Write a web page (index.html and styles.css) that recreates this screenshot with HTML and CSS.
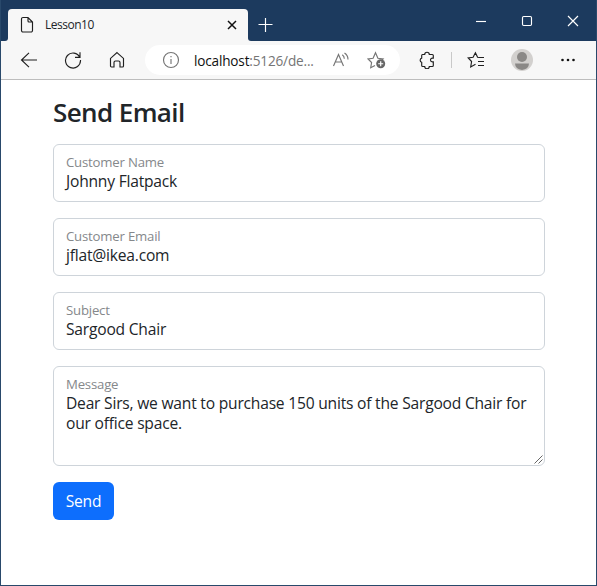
FILE: index.html
```html
<!DOCTYPE html>
<html lang="en">
<head>
<meta charset="utf-8">
<title>Lesson10</title>
<link rel="stylesheet" href="styles.css">
</head>
<body>
<div class="window">
  <header class="titlebar">
    <div class="edge"></div>
    <div class="tab-well"><div class="tab">
      <svg class="page-icon" width="14" height="18" viewBox="0 0 14 18"><path d="M3 1.5h5l4.5 4.5v8.500a1.500 1.500 0 0 1-1.500 1.500H3a1.500 1.500 0 0 1-1.500-1.500V3A1.500 1.500 0 0 1 3 1.500zM8 1.500V5a1 1 0 0 0 1 1h3.500"/></svg>
      <span class="tab-title">Lesson10</span>
      <svg class="tab-close" width="10" height="10" viewBox="0 0 10 10"><path d="M1 1l8 8M9 1L1 9"/></svg>
    </div></div>
    <div class="caption">
      <svg class="plus" width="16" height="16" viewBox="0 0 16 16"><path d="M7.500 1v14M.5 7.500h14"/></svg>
      <div class="controls">
        <svg width="12" height="12" viewBox="0 0 12 12"><path d="M1 6.500h10"/></svg>
        <svg width="12" height="12" viewBox="0 0 12 12"><rect x="1.500" y="1.500" width="9" height="9" rx="1.200"/></svg>
        <svg width="12" height="12" viewBox="0 0 12 12"><path d="M1 1l10 10M11 1L1 11"/></svg>
      </div>
    </div>
  </header>
  <nav class="toolbar">
    <svg class="back" width="18" height="18" viewBox="0 0 18 18"><path d="M17 9H1.500M9 1.800L1.500 9 9 16.200"/></svg>
    <svg class="reload" width="18" height="18" viewBox="0 0 18 18"><path d="M15.800 6.300A7.500 7.500 0 1 0 16.500 9M16 1.300v5h-5"/></svg>
    <svg class="home" width="16" height="18" viewBox="0 0 16 18"><path d="M8 1.600L14.500 7.400v7.600a1 1 0 0 1-1 1h-2.500v-4.500a1.500 1.500 0 0 0-1.500-1.500h-3A1.500 1.500 0 0 0 5 11.500V16H2.500a1 1 0 0 1-1-1V7.400z"/></svg>
    <div class="address">
      <svg class="info" width="18" height="18" viewBox="0 0 18 18"><circle cx="9" cy="9" r="7.500"/><path d="M9 8v5M9 5v1.300"/></svg>
      <span class="url"><b>localhost</b>:5126/de...</span>
      <svg class="read" width="18" height="18" viewBox="0 0 18 18"><path d="M1.500 15L6.500 3.500 11.500 15M3.200 11h6.600M10.300 3.800q2 1.500 2 4M12.500 2q3.500 2.300 3.500 6.500"/></svg>
      <svg class="star" width="20" height="18" viewBox="0 0 20 18"><path d="M8 14.500l-4.300 2.200 .9-5.200-3.500-3.500 5-.7L8.500 1.800l2.400 5.500 5.200.7-1.300 1.300"/><circle class="badge" cx="13.700" cy="12.700" r="4.500"/><path class="badge-plus" d="M13.700 10.200v5M11.200 12.700h5"/></svg>
    </div>
    <svg class="puzzle" width="16" height="18" viewBox="0 0 16 18"><path d="M3.500 3.500H5.700a2.300 2.300 0 0 1 4.600 0h3a1 1 0 0 1 1 1v2.600h-.9a1.900 1.900 0 0 0 0 3.800h.9v3.600a1 1 0 0 1-1 1h-3a2.300 2.300 0 0 1-4.600 0H3.700a1 1 0 0 1-1-1V11.300a2.200 2.200 0 0 1 0-4.200V4.500a1 1 0 0 1 .8-1z"/></svg>
    <span class="divider"></span>
    <svg class="favorites" width="18" height="18" viewBox="0 0 18 18"><path d="M8.500 13.300l-4.800 2.700 .9-5.500L1.200 7l4.900-.8L8.400 1.800l2.200 4.400 1.500.3H17M11 10.500h6M11 14.500h6"/></svg>
    <svg class="avatar" width="22" height="22" viewBox="0 0 22 22"><circle class="disc" cx="11" cy="11" r="11"/><circle class="person" cx="11" cy="8" r="5"/><path class="person" d="M4 14.500h14q-.2 5.700-7 6.500-6.800-.8-7-6.500z"/></svg>
    <svg class="more" width="16" height="4" viewBox="0 0 16 4"><circle cx="2.500" cy="2" r="1.300"/><circle cx="8" cy="2" r="1.300"/><circle cx="13.500" cy="2" r="1.300"/></svg>
  </nav>
  <main class="page">
    <h1>Send Email</h1>
    <div class="field"><span class="label">Customer Name</span><span class="value">Johnny Flatpack</span></div>
    <div class="field"><span class="label">Customer Email</span><span class="value">jflat@ikea.com</span></div>
    <div class="field"><span class="label">Subject</span><span class="value">Sargood Chair</span></div>
    <div class="field message"><span class="label">Message</span><span class="value">Dear Sirs, we want to purchase 150 units of the Sargood Chair for<br>our office space.</span>
      <svg class="grip" width="9" height="9" viewBox="0 0 9 9"><path d="M.5 8.500l8-8M4.500 8.500l4-4"/></svg>
    </div>
    <button class="send">Send</button>
  </main>
</div>
</body>
</html>
```
FILE: styles.css
```css
* { box-sizing: border-box; }
body { margin: 0; font-family: "Open Sans", "Noto Sans", sans-serif; color: #212529; }
svg { display: block; flex: none; fill: none; stroke: #202020; stroke-width: 1.15; }
.window { display: flex; flex-direction: column; width: 597px; height: 586px; background: #fff; border: 1px solid #29496b; border-top: 0; overflow: hidden; }
.titlebar { display: flex; height: 41px; background: #f7f7f7; flex: none; }
.edge { width: 7px; background: #1c3a5e; border-bottom-right-radius: 3px; }
.tab-well { width: 240px; padding-top: 9px; background: linear-gradient(#1c3a5e 20px, #f7f7f7 20px); }
.tab { display: flex; align-items: center; height: 32px; padding: 0 11px 0 12px; background: #f7f7f7; border-radius: 4px 4px 0 0; }
.tab-title { margin-left: 11px; font-size: 12px; letter-spacing: -.5px; line-height: 16px; }
.tab-close { margin-left: auto; stroke: #111; stroke-width: 1.5; }
.caption { display: flex; flex: 1; justify-content: space-between; padding: 0 17px 0 10px; background: #1c3a5e; border-bottom-left-radius: 3px; }
.caption svg { stroke: #fff; }
.plus { margin-top: 17px; }
.controls { display: flex; gap: 34px; padding-top: 15px; }
.toolbar { display: flex; align-items: center; flex: none; height: 39px; padding-left: 19px; background: #f7f7f7; border-bottom: 1px solid #bdbdbd; }
.reload { margin-left: 26px; }
.home { margin-left: 27px; }
.address { display: flex; align-items: center; flex: none; width: 255px; height: 30px; margin-left: 20px; padding-left: 17px; background: #fff; border-radius: 15px; }
.address svg { stroke: #757575; }
.url { width: 126px; margin-left: 14px; font-size: 13.6px; letter-spacing: -.18px; color: #757575; white-space: nowrap; }
.url b { font-weight: 400; color: #111; }
.read { margin-left: 12px; }
.star { margin-left: 17px; }
.address .badge { fill: #666; stroke: none; }
.address .badge-plus { stroke: #fff; }
.puzzle { margin-left: 19px; }
.divider { width: 1px; height: 16px; margin-left: 16px; background: #c9c9c9; }
.favorites { margin-left: 15px; }
.avatar { margin-left: 26px; stroke: none; }
.disc { fill: #d2d0ce; }
.person { fill: #8a8886; }
.more { margin-left: 27px; fill: #111; stroke: none; }
.page { padding: 16px 51px 0 52px; }
h1 { margin: 0 0 15px; font-size: 26px; line-height: 33px; font-weight: 600; letter-spacing: -.6px; }
.field { position: relative; height: 58px; margin-bottom: 16px; padding: 8px 12px; border: 1px solid #ced4da; border-radius: 6px; white-space: nowrap; }
.label, .value { display: block; }
.label { height: 18px; font-size: 13.2px; line-height: 19px; letter-spacing: -.2px; color: #85888b; }
.value { font-size: 15.6px; line-height: 20px; letter-spacing: -.21px; }
.message { height: 100px; }
.grip { position: absolute; right: 1px; bottom: 1px; stroke: #666; stroke-width: 1; }
.send { display: block; width: 61px; height: 38px; padding: 0; border: 0; border-radius: 6px; background: #0d6efd; color: #fff; font-family: inherit; font-size: 15.6px; letter-spacing: -.2px; }
```
